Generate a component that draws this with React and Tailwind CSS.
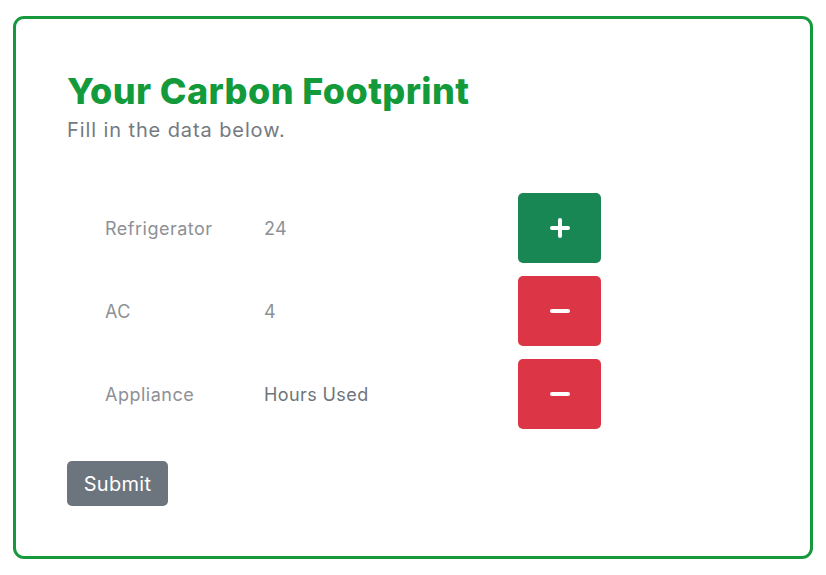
import { useState } from "react";

const ROWS = [
  { name: "Refrigerator", hours: "24", action: "add" },
  { name: "AC", hours: "4", action: "remove" },
  { name: "Appliance", hours: "Hours Used", action: "remove", placeholder: true },
];

function PlusIcon() {
  return (
    <svg width="20" height="20" viewBox="0 0 20 20">
      <path d="M10 2v16M2 10h16" stroke="white" strokeWidth="4" strokeLinecap="round" />
    </svg>
  );
}

function MinusIcon() {
  return (
    <svg width="20" height="20" viewBox="0 0 20 20">
      <path d="M2 10h16" stroke="white" strokeWidth="4" strokeLinecap="round" />
    </svg>
  );
}

export default function App() {
  const [rows] = useState(ROWS);

  return (
    <div className="min-h-screen bg-white pl-[13px] pt-[16px] font-['Inter',sans-serif]">
      <div className="w-[800px] h-[543px] rounded-[11px] border-[3px] border-[#16993d] pl-[51px] pt-[50px]">
        {/* Heading */}
        <h1 className="text-[36px] leading-[44px] font-extrabold text-[#139a3b] tracking-[0.4px]">
          Your Carbon Footprint
        </h1>
        <p className="mt-[5px] text-[20px] leading-[24px] text-[#737a82] tracking-[0.9px]">
          Fill in the data below.
        </p>

        {/* Appliance rows */}
        <div className="mt-[51px] flex flex-col gap-[13px]">
          {rows.map((row) => (
            <div key={row.name} className="flex items-center h-[70px]">
              <div className="w-[197px] pl-[38px] text-[18px] text-[#8d9196] tracking-[0.5px]">
                {row.name}
              </div>
              <div
                className={`w-[254px] text-[18px] tracking-[0.4px] ${
                  row.placeholder ? "text-[#6e747b]" : "text-[#8d9196]"
                }`}
              >
                {row.hours}
              </div>
              <button
                className={`w-[83px] h-[70px] rounded-[5px] flex items-center justify-center ${
                  row.action === "add" ? "bg-[#198754]" : "bg-[#dc3545]"
                }`}
              >
                {row.action === "add" ? <PlusIcon /> : <MinusIcon />}
              </button>
            </div>
          ))}
        </div>

        {/* Submit */}
        <button className="mt-[32px] w-[101px] h-[45px] rounded-[5px] bg-[#6c757d] text-white text-[20px] tracking-[0.3px]">
          Submit
        </button>
      </div>
    </div>
  );
}
